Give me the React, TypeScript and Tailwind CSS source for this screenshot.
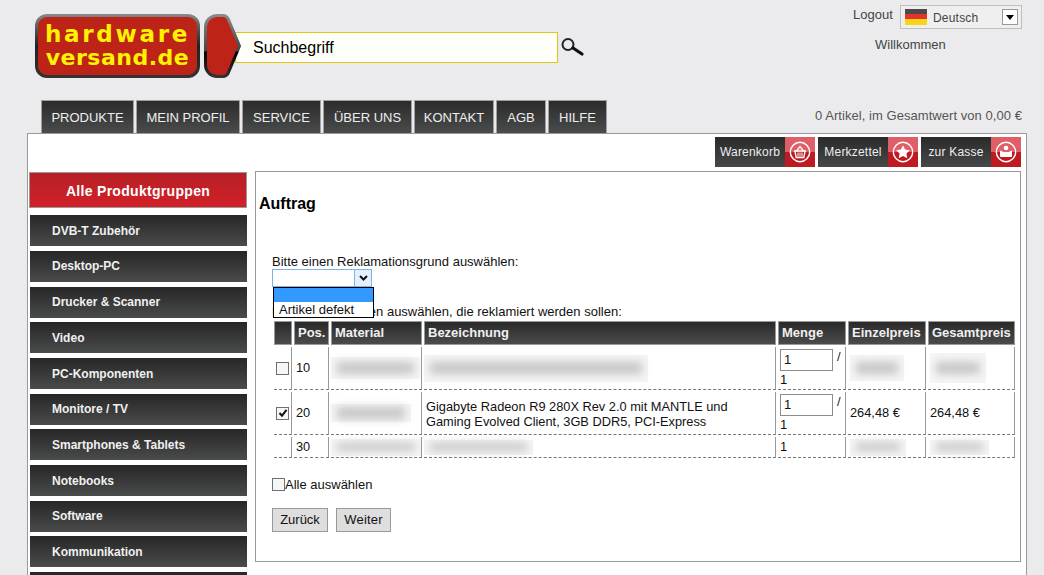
const font = "font-['Liberation_Sans',Arial,sans-serif]";

const tabs = [
  { label: "PRODUKTE", w: "w-[93px]" },
  { label: "MEIN PROFIL", w: "w-[104px]" },
  { label: "SERVICE", w: "w-[79px]" },
  { label: "ÜBER UNS", w: "w-[89px]" },
  { label: "KONTAKT", w: "w-[80px]" },
  { label: "AGB", w: "w-[50px]" },
  { label: "HILFE", w: "w-[59px]" },
];

const groups = [
  "DVB-T Zubehör",
  "Desktop-PC",
  "Drucker & Scanner",
  "Video",
  "PC-Komponenten",
  "Monitore / TV",
  "Smartphones & Tablets",
  "Notebooks",
  "Software",
  "Kommunikation",
  "",
];

const BasketIcon = () => (
  <svg width="22" height="22" viewBox="0 0 22 22" fill="none">
    <circle cx="11" cy="11" r="9.7" stroke="#fff" strokeWidth="1.4" />
    <path d="M5 10h12M6 10.5l1.2 6h7.6l1.2-6M7.5 10l3.5-4.5 3.5 4.5" stroke="#fff" strokeWidth="1.3" />
    <path d="M9 11.5v4M11 11.5v4M13 11.5v4" stroke="#fff" strokeWidth="1" />
  </svg>
);

const StarIcon = () => (
  <svg width="22" height="22" viewBox="0 0 22 22" fill="none">
    <circle cx="11" cy="11" r="9.7" stroke="#fff" strokeWidth="1.4" />
    <path d="M11 4.2l2.1 4.4 4.8.6-3.5 3.3.9 4.8-4.3-2.4-4.3 2.4.9-4.8-3.5-3.3 4.8-.6z" fill="#fff" />
  </svg>
);

const KasseIcon = () => (
  <svg width="22" height="22" viewBox="0 0 22 22" fill="none">
    <circle cx="11" cy="11" r="9.7" stroke="#fff" strokeWidth="1.4" />
    <circle cx="11" cy="7" r="2.3" fill="#fff" />
    <path d="M5 9.5l3.5 1.5h5L17 9.5V15a1 1 0 0 1-1 1H6a1 1 0 0 1-1-1z" fill="#fff" />
  </svg>
);

const SearchIcon = () => (
  <svg width="25" height="20" viewBox="0 0 25 20" fill="none">
    <circle cx="8" cy="7.5" r="5.5" stroke="#222" strokeWidth="2" />
    <path d="M13 11l9 6" stroke="#111" strokeWidth="3.2" strokeLinecap="round" />
  </svg>
);

const LogoArrow = () => (
  <svg width="38" height="64" viewBox="0 0 38 64" className="relative z-10">
    <defs>
      <linearGradient id="arrowEdge" x1="0" y1="0" x2="0" y2="1">
        <stop offset="0" stopColor="#8a8a8a" />
        <stop offset="0.58" stopColor="#444" />
        <stop offset="0.6" stopColor="#000" />
        <stop offset="1" stopColor="#333" />
      </linearGradient>
    </defs>
    <path
      d="M13 1.500h6a6 6 0 0 1 5 3l11.500 27.500-11.500 27.500a6 6 0 0 1-5 3H13A11.500 11.500 0 0 1 1.500 51V13A11.500 11.500 0 0 1 13 1.500z"
      fill="#bd2316"
      stroke="url(#arrowEdge)"
      strokeWidth="3"
    />
  </svg>
);

const Blur = ({ w, h = "h-[12px]", bg = "h-[24px]" }: { w: string; h?: string; bg?: string }) => (
  <div className={`${w} ${bg} bg-[#f5f5f5] flex items-center px-[6px]`}>
    <div className={`w-full ${h} bg-[#c6c6c6] blur-[4px]`} />
  </div>
);

const Qty = () => (
  <div className="text-[13px] leading-[16px]">
    <input
      readOnly
      value="1"
      className="w-[53px] h-[22px] border border-[#8c8c8c] bg-white px-[3px] text-[13px] align-top outline-none"
    />
    <span className="ml-1 text-[#222]">/</span>
    <div className="mt-[1px]">1</div>
  </div>
);

const Check = ({ checked }: { checked?: boolean }) => (
  <span className="w-[13px] h-[13px] shrink-0 border border-[#707070] bg-[#f6f6f6] flex items-center justify-center">
    {checked && (
      <svg width="10" height="10" viewBox="0 0 10 10" fill="none">
        <path d="M1.500 5l2.500 2.700L8.500 1.800" stroke="#111" strokeWidth="2" />
      </svg>
    )}
  </span>
);

const heads = ["", "Pos.", "Material", "Bezeichnung", "Menge", "Einzelpreis", "Gesamtpreis"];

const cell =
  "border-b border-r border-dashed [border-right-style:solid] border-b-[#777] border-r-[#999] align-middle px-[2px] text-[12.8px] text-[#111]";
const flush =
  "border-b border-r border-dashed [border-right-style:solid] border-b-[#777] border-r-[#999] align-middle p-0";

export default function App() {
  return (
    <div className={`w-[1044px] h-[575px] overflow-hidden bg-[#ebebed] ${font} text-[13px] text-[#111]`}>
      <header className="flex justify-between h-[100px]">
        <div className="flex items-start pl-[35px] pt-[14px]">
          <div className="w-[165px] h-[64px] rounded-[12px] bg-linear-to-b from-[#8a8a8a] via-[#222] to-[#333] p-[3px]">
            <div className="h-full rounded-[9px] bg-[#bd2316] flex flex-col items-center justify-center font-['DejaVu_Sans',sans-serif] font-bold text-[#fff200]">
              <span className="text-[23px] leading-[23px] tracking-[2.7px]">hardware</span>
              <span className="text-[22px] leading-[23px] tracking-[0.5px]">versand.de</span>
            </div>
          </div>
          <div className="ml-[4px] flex items-start">
            <LogoArrow />
            <div className="-ml-[7px] mt-[18px] w-[323px] h-[31px] border border-[#e2c617] bg-[#fffffa] pl-[17px] flex items-center text-[16px] text-black">
              Suchbegriff
            </div>
            <div className="ml-[2px] mt-[23px]">
              <SearchIcon />
            </div>
          </div>
        </div>
        <div className="w-[169px] mr-[22px] pt-[5px] flex flex-col text-[#444]">
          <div className="flex items-start justify-between">
            <span>Logout</span>
            <div className="w-[122px] h-[24px] border border-[#bfbfbf] bg-[#efefef] flex items-center pl-[4px] pr-[3px]">
              <div className="w-[22px] h-[16px] flex flex-col">
                <div className="h-[5px] bg-[#4a4a4a]" />
                <div className="h-[5px] bg-[#e5322d]" />
                <div className="h-[6px] bg-[#f7d417]" />
              </div>
              <span className="ml-[6px] pt-[1px] flex-1 text-[12px] tracking-[0.2px]">Deutsch</span>
              <span className="w-[16px] h-[16px] border border-[#999] bg-white flex items-center justify-center">
                <span className="border-x-[4px] border-x-transparent border-t-[5px] border-t-black" />
              </span>
            </div>
          </div>
          <span className="ml-[22px] mt-[6px]">Willkommen</span>
        </div>
      </header>

      <div className="flex justify-between items-center h-[33px] pl-[41px] pr-[22px]">
        <nav className="flex gap-[2px]">
          {tabs.map((t) => (
            <div
              key={t.label}
              className={`${t.w} h-[33px] pt-[1px] flex items-center justify-center border-x border-t border-[#a0a0a0] bg-linear-to-b from-[#2c2c2d] to-[#4a4b4b] text-[13px] text-[#eee]`}
            >
              {t.label}
            </div>
          ))}
        </nav>
        <span className="pb-[1px] text-[#555] tracking-[0.05px]">0 Artikel, im Gesamtwert von 0,00 €</span>
      </div>

      <main className="ml-[27px] w-[1000px] h-[460px] border border-[#999] bg-white">
        <div className="flex justify-end gap-[3px] pt-[3px] pr-[5px]">
          {[
            { label: "Warenkorb", icon: <BasketIcon /> },
            { label: "Merkzettel", icon: <StarIcon /> },
            { label: "zur Kasse", icon: <KasseIcon /> },
          ].map((b) => (
            <div key={b.label} className="flex w-[100px] h-[30px]">
              <div className="w-[70px] flex items-center justify-center bg-linear-to-b from-[#2a2a2b] to-[#474848] text-[12px] text-[#eee] tracking-[0.2px]">
                {b.label}
              </div>
              <div className="w-[30px] flex items-center justify-center bg-linear-to-b from-[#df5f68] from-50% to-[#bd1b21] to-50%">
                {b.icon}
              </div>
            </div>
          ))}
        </div>

        <div className="flex mt-[4px]">
          <aside className="w-[218px] ml-[1px] mt-[1px] shrink-0">
            <div className="h-[36px] pt-[2px] border border-[#999] bg-linear-to-b from-[#b72026] to-[#d22029] flex items-center justify-center font-bold text-[14px] text-white tracking-[0.3px]">
              Alle Produktgruppen
            </div>
            <ul className="mt-[7.3px] ml-[1px] flex flex-col gap-[4.7px]">
              {groups.map((g, i) => (
                <li
                  key={i}
                  className="h-[31px] shrink-0 pl-[22px] flex items-center bg-linear-to-b from-[#272728] to-[#4a4b4b] font-bold text-[12px] text-[#f0f0f0]"
                >
                  {g}
                </li>
              ))}
            </ul>
          </aside>

          <section className="ml-[8px] w-[766px] h-[391px] shrink-0 border border-[#999] pl-[3px]">
            <h1 className="mt-[23px] font-bold text-[16px] leading-[18px] text-black">Auftrag</h1>
            <div className="relative ml-[13px] mt-[42px]">
              <div className="leading-[14px]">Bitte einen Reklamationsgrund auswählen:</div>
              <div className="w-[100px] h-[18px] border border-[#7eb4ea] bg-white flex justify-end">
                <span className="w-[17px] border-l border-[#7eb4ea] bg-[#e3effb] flex items-center justify-center">
                  <svg width="9" height="6" viewBox="0 0 9 6" fill="none">
                    <path d="M1 1l3.500 3.500L8 1" stroke="#111" strokeWidth="2" />
                  </svg>
                </span>
              </div>
              <div className="absolute left-[1px] top-[32px] z-20 w-[101px] h-[31px] border border-black bg-white">
                <div className="h-[14px] bg-[#3399ff]" />
                <div className="pl-[5px] leading-[16px]">Artikel defekt</div>
              </div>
              <div className="mt-[18px] leading-[14px]">Bitte die Positionen auswählen, die reklamiert werden sollen:</div>
            </div>

            <table className="ml-[13px] w-[745px] table-fixed border-separate border-spacing-[2px]">
              <colgroup>
                <col className="w-[18px]" />
                <col className="w-[35px]" />
                <col className="w-[91px]" />
                <col className="w-[352px]" />
                <col className="w-[68px]" />
                <col className="w-[78px]" />
                <col className="w-[87px]" />
              </colgroup>
              <thead>
                <tr>
                  {heads.map((h) => (
                    <th
                      key={h}
                      className="h-[24px] p-0 pl-[3px] border border-[#999] bg-linear-to-b from-[#2a2a2b] to-[#4a4b4b] text-left font-bold text-[13px] text-[#f0f0f0] whitespace-nowrap"
                    >
                      {h}
                    </th>
                  ))}
                </tr>
              </thead>
              <tbody>
                <tr className="h-[43px]">
                  <td className={cell}><Check /></td>
                  <td className={cell}>10</td>
                  <td className={flush}><Blur w="w-[89px]" bg="h-[22px]" /></td>
                  <td className={flush}><Blur w="w-[224px]" bg="h-[27px]" /></td>
                  <td className={cell}><Qty /></td>
                  <td className={cell}><Blur w="w-[54px]" bg="h-[26px]" /></td>
                  <td className={cell}><Blur w="w-[56px]" bg="h-[30px]" /></td>
                </tr>
                <tr className="h-[43px]">
                  <td className={cell}><Check checked /></td>
                  <td className={cell}>20</td>
                  <td className={flush}><Blur w="w-[80px]" bg="h-[18px]" /></td>
                  <td className={`${cell} leading-[15px] pt-[1px]`}>
                    Gigabyte Radeon R9 280X Rev 2.0 mit MANTLE und
                    <br />
                    Gaming Evolved Client, 3GB DDR5, PCI-Express
                  </td>
                  <td className={cell}><Qty /></td>
                  <td className={cell}>264,48 €</td>
                  <td className={cell}>264,48 €</td>
                </tr>
                <tr className="h-[21px]">
                  <td className={cell} />
                  <td className={cell}>30</td>
                  <td className={flush}><Blur w="w-[90px]" bg="h-[17px]" h="h-[8px]" /></td>
                  <td className={flush}><Blur w="w-[109px]" bg="h-[15px]" h="h-[8px]" /></td>
                  <td className={cell}>1</td>
                  <td className={cell}><Blur w="w-[56px]" bg="h-[17px]" h="h-[8px]" /></td>
                  <td className={cell}><Blur w="w-[59px]" bg="h-[15px]" h="h-[8px]" /></td>
                </tr>
              </tbody>
            </table>

            <div className="ml-[13px] mt-[15px] flex items-center">
              <Check />
              <span>Alle auswählen</span>
            </div>
            <div className="ml-[13px] mt-[13px] flex gap-[8px]">
              <div className="w-[56px] h-[24px] border border-[#999] bg-[#dedede] flex items-center justify-center">Zurück</div>
              <div className="w-[55px] h-[24px] border border-[#999] bg-[#dedede] flex items-center justify-center tracking-[0.2px]">Weiter</div>
            </div>
          </section>
        </div>
      </main>
    </div>
  );
}
